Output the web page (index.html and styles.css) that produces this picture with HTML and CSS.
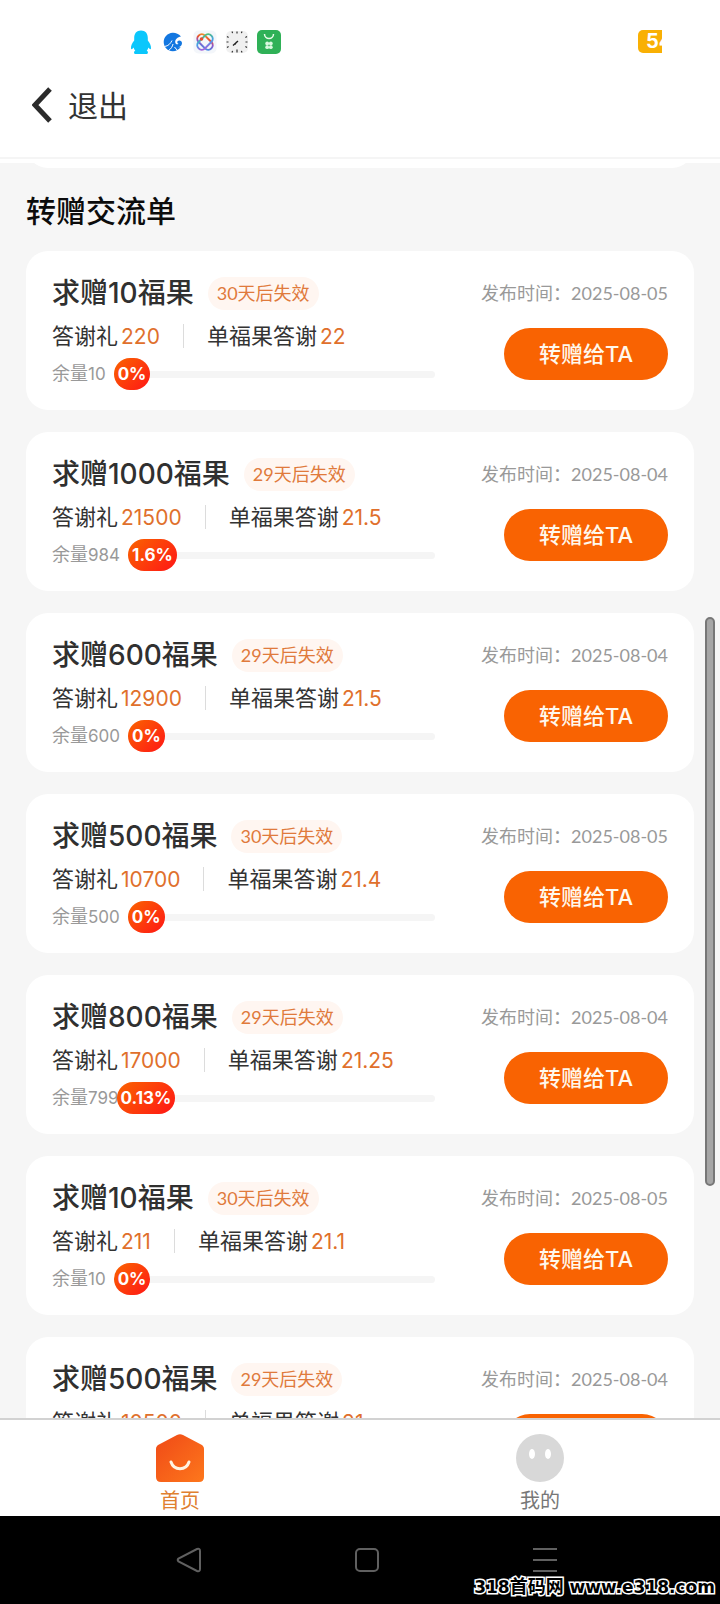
FILE: index.html
```
<!DOCTYPE html>
<html lang="zh-CN">
<head>
<meta charset="utf-8">
<meta name="viewport" content="width=device-width, initial-scale=1">
<title>转赠交流单</title>
<link rel="stylesheet" href="styles.css">
</head>
<body>
<div class="status-bar">
  <div class="status-icons">
    <svg class="status-icon" viewBox="0 0 24 24"><path fill="#0bc7fc" d="M12 0.500C7.500 .5 5.200 3.500 5.200 8v2.500C3 13 1.800 16 2 18.500c.2 1.300 1.300.8 2.600-1 .3 1.300.8 2.300 1.700 3.200C4.500 21.500 4.500 24 7 24h10c2.500 0 2.500-2.500.7-3.300.9-.9 1.400-1.900 1.700-3.200 1.300 1.800 2.400 2.300 2.600 1 .2-2.500-1-5.500-3.200-8V8C18.800 3.500 16.500.5 12 .5z"/></svg>
    <svg class="status-icon" viewBox="0 0 24 24"><path fill="#1377e0" d="M20 6.500C17.500 3.500 14.500 2.500 11.500 2.700 6.500 3 2.700 7 2.700 12s4 9.300 9 9.300c3.500 0 6.300-1.500 8-4.200l-3 .4c1.800-.5 4.300-1.800 4.300-4.300 0-1.700-1.200-2.700-2.700-2.700-1.300 0-2 .8-2 1.700 0 .7.500 1.300 1.200 1.500-.8 1-3.300.8-3.300-1.700 0-2.800 2.300-5 5.800-5.500z"/><path d="M11 10.500c-1.500 3-3.500 5.500-7.500 6M12 14c-.5 2.500-2 5-4.500 6.500M13.500 17l3 3.500" fill="none" stroke="#fff" stroke-width="1"/></svg>
    <svg class="status-icon" viewBox="0 0 24 24"><defs><linearGradient id="orbit" x1="0" y1="0" x2="1" y2="1"><stop offset="0" stop-color="#f2a22f"/><stop offset=".3" stop-color="#e8502f"/><stop offset=".55" stop-color="#9355c8"/><stop offset="1" stop-color="#3b8fe8"/></linearGradient><linearGradient id="orbit-cross" x1="0" y1="1" x2="1" y2="0"><stop offset="0" stop-color="#b356d8"/><stop offset=".5" stop-color="#45a1e8"/><stop offset="1" stop-color="#52c26b"/></linearGradient></defs><rect x=".5" y=".5" width="23" height="23" rx="5" fill="#f3f6fa"/><g fill="none" stroke-width="2"><rect x="3" y="7.500" width="18" height="9" rx="4.500" transform="rotate(45 12 12)" stroke="url(#orbit)"/><rect x="3" y="7.500" width="18" height="9" rx="4.500" transform="rotate(-45 12 12)" stroke="url(#orbit-cross)"/></g><circle cx="8.500" cy="9" r="1.800" fill="#e8502f"/></svg>
    <svg class="status-icon" viewBox="0 0 24 24"><rect x="1" y="1" width="22" height="22" rx="5" fill="#f0f0f0"/><path d="M12 1.500v2M7 1.500l.6 1.600M17 1.500l-.6 1.600M2 6.500l1.600 1M22 6.500l-1.600 1M1.500 12h2M22.500 12h-2M2 17.500l1.600-1M22 17.500l-1.600-1M7 22.500l.6-1.600M17 22.500l-.6-1.600M12 22.500v-3" stroke="#333" stroke-width="1.200"/><path d="M13 11l-5 4.500M11.500 12l-1.500 2.500" stroke="#222" stroke-width="1.400"/></svg>
    <svg class="status-icon" viewBox="0 0 24 24"><rect width="24" height="24" rx="5" fill="#2fb157"/><path d="M7.500 4a4.500 4.500 0 0 0 9 0" fill="none" stroke="#e8fbe9" stroke-width="1.500"/><g fill="#d9f8df"><circle cx="10.200" cy="13.500" r="1.900"/><circle cx="13.800" cy="13.500" r="1.900"/><circle cx="10.200" cy="17.200" r="1.900"/><circle cx="13.800" cy="17.200" r="1.900"/></g></svg>
  </div>
  <div class="battery">54</div>
</div>

<header class="header">
  <button class="back" type="button">
    <svg class="back-icon" viewBox="0 0 20 36"><path d="M18 2L3 18l15 16" fill="none" stroke="#2b2b2b" stroke-width="5"/></svg>
    <span>退出</span>
  </button>
</header>

<main class="content">
  <div class="previous-card"></div>
  <h1 class="section-title">转赠交流单</h1>
  <div class="cards">
    <article class="card">
      <div class="info">
        <div class="heading"><h2 class="name">求赠10福果</h2><span class="badge">30天后失效</span></div>
        <div class="stats"><span>答谢礼<b class="amount">220</b></span><i class="divider"></i><span>单福果答谢<b class="amount">22</b></span></div>
        <div class="progress"><span class="remain">余量<span class="count">10</span></span><div class="track"><span class="fill">0%</span></div></div>
      </div>
      <div class="action"><span class="date">发布时间：2025-08-05</span><button class="give" type="button">转赠给TA</button></div>
    </article>
    <article class="card">
      <div class="info">
        <div class="heading"><h2 class="name">求赠1000福果</h2><span class="badge">29天后失效</span></div>
        <div class="stats"><span>答谢礼<b class="amount">21500</b></span><i class="divider"></i><span>单福果答谢<b class="amount">21.5</b></span></div>
        <div class="progress"><span class="remain">余量<span class="count">984</span></span><div class="track"><span class="fill">1.6%</span></div></div>
      </div>
      <div class="action"><span class="date">发布时间：2025-08-04</span><button class="give" type="button">转赠给TA</button></div>
    </article>
    <article class="card">
      <div class="info">
        <div class="heading"><h2 class="name">求赠600福果</h2><span class="badge">29天后失效</span></div>
        <div class="stats"><span>答谢礼<b class="amount">12900</b></span><i class="divider"></i><span>单福果答谢<b class="amount">21.5</b></span></div>
        <div class="progress"><span class="remain">余量<span class="count">600</span></span><div class="track"><span class="fill">0%</span></div></div>
      </div>
      <div class="action"><span class="date">发布时间：2025-08-04</span><button class="give" type="button">转赠给TA</button></div>
    </article>
    <article class="card">
      <div class="info">
        <div class="heading"><h2 class="name">求赠500福果</h2><span class="badge">30天后失效</span></div>
        <div class="stats"><span>答谢礼<b class="amount">10700</b></span><i class="divider"></i><span>单福果答谢<b class="amount">21.4</b></span></div>
        <div class="progress"><span class="remain">余量<span class="count">500</span></span><div class="track"><span class="fill">0%</span></div></div>
      </div>
      <div class="action"><span class="date">发布时间：2025-08-05</span><button class="give" type="button">转赠给TA</button></div>
    </article>
    <article class="card">
      <div class="info">
        <div class="heading"><h2 class="name">求赠800福果</h2><span class="badge">29天后失效</span></div>
        <div class="stats"><span>答谢礼<b class="amount">17000</b></span><i class="divider"></i><span>单福果答谢<b class="amount">21.25</b></span></div>
        <div class="progress"><span class="remain">余量<span class="count">799</span></span><div class="track"><span class="fill fill-long">0.13%</span></div></div>
      </div>
      <div class="action"><span class="date">发布时间：2025-08-04</span><button class="give" type="button">转赠给TA</button></div>
    </article>
    <article class="card">
      <div class="info">
        <div class="heading"><h2 class="name">求赠10福果</h2><span class="badge">30天后失效</span></div>
        <div class="stats"><span>答谢礼<b class="amount">211</b></span><i class="divider"></i><span>单福果答谢<b class="amount">21.1</b></span></div>
        <div class="progress"><span class="remain">余量<span class="count">10</span></span><div class="track"><span class="fill">0%</span></div></div>
      </div>
      <div class="action"><span class="date">发布时间：2025-08-05</span><button class="give" type="button">转赠给TA</button></div>
    </article>
    <article class="card">
      <div class="info">
        <div class="heading"><h2 class="name">求赠500福果</h2><span class="badge">29天后失效</span></div>
        <div class="stats"><span>答谢礼<b class="amount">10500</b></span><i class="divider"></i><span>单福果答谢<b class="amount">21</b></span></div>
      </div>
      <div class="action"><span class="date">发布时间：2025-08-04</span><button class="give" type="button">转赠给TA</button></div>
    </article>
  </div>
  <div class="scroll-thumb"></div>
</main>

<nav class="tabs">
  <a class="tab tab-active" href="#home">
    <svg class="tab-icon" viewBox="0 0 48 48"><defs><linearGradient id="house" x1="0" y1="0" x2="1" y2="1"><stop offset="0" stop-color="#f04a17"/><stop offset="1" stop-color="#fd771c"/></linearGradient></defs><path fill="url(#house)" d="M21 1q3-1.500 6 0l18 9.500q3 1.500 3 4.500v28q0 5-5 5H5q-5 0-5-5V15q0-3 3-4.500z"/><path d="M15 28c3 9 15 9 18 0" fill="none" stroke="#fff4e2" stroke-width="3" stroke-linecap="round"/></svg>
    <span>首页</span>
  </a>
  <a class="tab" href="#mine">
    <svg class="tab-icon" viewBox="0 0 48 48"><circle cx="24" cy="24" r="24" fill="#d8d8d8"/><ellipse cx="16" cy="20" rx="3" ry="5" fill="#fff"/><ellipse cx="32" cy="20" rx="3" ry="5" fill="#fff"/></svg>
    <span>我的</span>
  </a>
</nav>

<footer class="system-nav">
  <button class="system-key" type="button" aria-label="返回"><svg class="system-icon" viewBox="0 0 26 26"><path d="M2.500 11.500Q1 13 2.500 14.500L21 24q3 1 3-2V4q0-3-3-2z"/></svg></button>
  <button class="system-key" type="button" aria-label="主屏幕"><svg class="system-icon" viewBox="0 0 26 26"><rect x="2" y="2" width="22" height="22" rx="4"/></svg></button>
  <button class="system-key" type="button" aria-label="最近任务"><svg class="system-icon" viewBox="0 0 26 26"><path d="M1 2h24M1 13h24M1 24h24"/></svg></button>
  <span class="watermark">318<span class="watermark-name">首码网</span> www.e318.com</span>
</footer>
</body>
</html>
```
FILE: styles.css
```
* {
  box-sizing: border-box;
}

body {
  margin: 0;
  height: 100vh;
  display: flex;
  flex-direction: column;
  overflow: hidden;
  background: #fff;
  color: #333;
  font-family: Lato, "Noto Sans CJK SC", sans-serif;
}

button {
  border: 0;
  padding: 0;
  background: none;
  color: inherit;
  font: inherit;
}

.status-bar {
  display: flex;
  flex: none;
  justify-content: space-between;
  padding: 30px 58px 0 129px;
}

.status-icons {
  display: flex;
  gap: 8px;
}

.status-icon {
  display: block;
  width: 24px;
  height: 24px;
}

.battery {
  width: 24px;
  height: 23px;
  padding-left: 8px;
  overflow: hidden;
  border-radius: 5px 0 0 5px;
  background: #f9b004;
  color: #fff;
  font: 700 20px/23px Inter, Arial, sans-serif;
}

.header {
  flex: none;
  display: flex;
  height: 105px;
  padding: 0 0 2px 32px;
  border-bottom: 2px solid #f5f5f5;
}

.back {
  display: flex;
  align-items: center;
  gap: 16px;
  font-size: 30px;
  line-height: 40px;
}

.back-icon {
  width: 20px;
  height: 36px;
}

.content {
  position: relative;
  flex: 1;
  min-height: 0;
  overflow: hidden;
  border-top: 4px solid #fff;
  background: #f6f6f6;
}

.previous-card {
  height: 44px;
  margin: -39px 26px 0;
  border-radius: 22px;
  background: #fff;
}

.section-title {
  margin: 0;
  padding: 22px 26px 21px;
  color: #0c0c0c;
  font-size: 30px;
  font-weight: 500;
  line-height: 40px;
}

.cards {
  display: flex;
  flex-direction: column;
  gap: 22px;
  padding: 0 26px;
}

.card {
  display: grid;
  grid-template-columns: minmax(0, 1fr) 188px;
  gap: 45px;
  padding: 26px 26px 20px;
  border-radius: 22px;
  background: #fff;
}

.heading {
  display: flex;
  align-items: center;
  gap: 14px;
  height: 33px;
}

.name {
  margin: 0;
  color: #303030;
  font-family: Inter, "Noto Sans CJK SC", sans-serif;
  font-size: 28px;
  font-weight: 500;
  line-height: 35px;
}

.badge {
  padding: 0 9px;
  border-radius: 17px;
  background: #fff6f1;
  color: #e07a3c;
  font-size: 18px;
  line-height: 33px;
}

.stats {
  display: flex;
  align-items: center;
  gap: 23px;
  height: 28px;
  margin-top: 12px;
  font-size: 22px;
  line-height: 28px;
  white-space: nowrap;
}

.amount {
  margin-left: 3px;
  color: #e0702c;
  font-family: Inter, sans-serif;
  font-size: 21px;
  font-weight: 400;
}

.divider {
  width: 1px;
  height: 24px;
  background: #dcdcdc;
}

.progress {
  display: flex;
  align-items: center;
  gap: 8px;
  height: 32px;
  margin-top: 8px;
  color: #999;
  font-size: 18px;
}

.remain {
  line-height: 28px;
  padding-bottom: 2px;
}

.count {
  font-family: Inter, sans-serif;
  font-size: 17px;
}

.track {
  display: flex;
  flex: 1;
  align-items: center;
  height: 7px;
  border-radius: 4px;
  background: #f5f5f5;
}

.fill {
  padding: 0 4px;
  border-radius: 16px;
  background: linear-gradient(135deg, #fa6400, #ff1616);
  color: #fff;
  font-family: Inter, sans-serif;
  font-size: 17px;
  font-weight: 700;
  line-height: 32px;
}

.fill-long {
  margin-left: -10px;
}

.action {
  display: flex;
  flex-direction: column;
  align-items: flex-end;
  gap: 18px;
}

.date {
  color: #999;
  font-size: 18px;
  line-height: 33px;
  white-space: nowrap;
}

.give {
  width: 164px;
  height: 52px;
  padding-bottom: 4px;
  border-radius: 26px;
  background: #f96302;
  color: #fff8ec;
  font-family: Inter, "Noto Sans CJK SC", sans-serif;
  font-size: 22px;
  font-weight: 500;
}

.scroll-thumb {
  position: absolute;
  top: 454px;
  right: 5px;
  width: 10px;
  height: 569px;
  border: 2px solid #777;
  border-radius: 5px;
  background: #a6a6a6;
}

.tabs {
  display: flex;
  flex: none;
  height: 98px;
  border-top: 2px solid #d2d2d2;
}

.tab {
  display: flex;
  flex: 1;
  flex-direction: column;
  align-items: center;
  gap: 4px;
  padding-top: 14px;
  color: #777;
  font-size: 20px;
  line-height: 28px;
  text-decoration: none;
}

.tab-active {
  color: #e08030;
}

.tab-icon {
  width: 48px;
  height: 48px;
}

.system-nav {
  position: relative;
  display: flex;
  flex: none;
  height: 88px;
  padding: 0 86px 0 100px;
  background: #000;
}

.system-key {
  display: flex;
  flex: 1;
  align-items: center;
  justify-content: center;
}

.system-icon {
  width: 26px;
  height: 26px;
  fill: none;
  stroke: #606060;
  stroke-width: 2;
}

.watermark {
  position: absolute;
  right: 5px;
  bottom: 5px;
  color: #000;
  font: 700 17px/24px "DejaVu Sans", "Noto Sans CJK SC", sans-serif;
  -webkit-text-stroke: 3px #fff;
  paint-order: stroke fill;
}

.watermark-name {
  font-size: 18px;
}
```
